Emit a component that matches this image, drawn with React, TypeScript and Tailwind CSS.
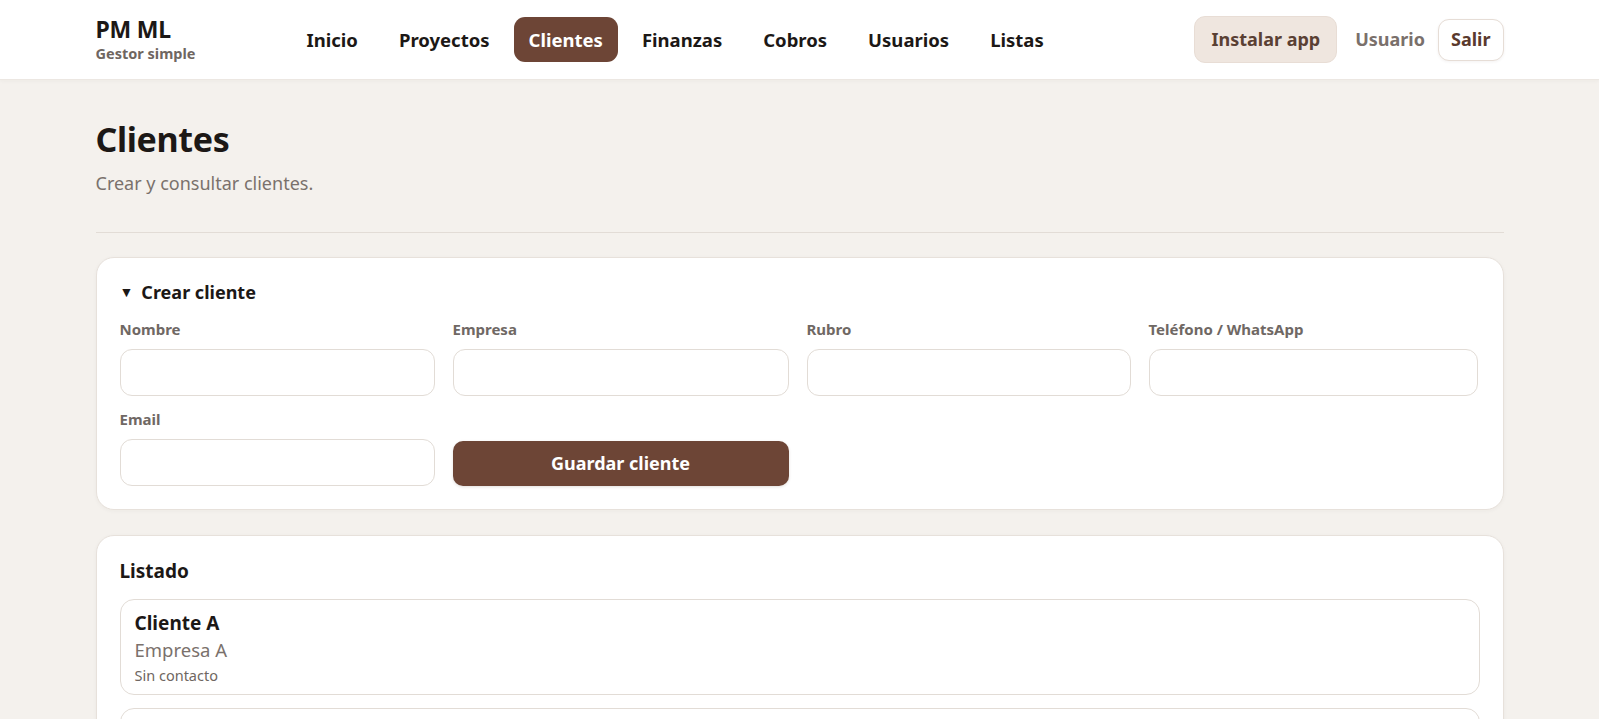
import { useState } from "react";

const navItems = ["Inicio", "Proyectos", "Clientes", "Finanzas", "Cobros", "Usuarios", "Listas"];

const fields = [
  { label: "Nombre", key: "nombre" },
  { label: "Empresa", key: "empresa" },
  { label: "Rubro", key: "rubro" },
  { label: "Teléfono / WhatsApp", key: "telefono" },
];

type Cliente = { nombre: string; empresa: string; contacto?: string };

export default function App() {
  const [open, setOpen] = useState(true);
  const [clientes] = useState<Cliente[]>([
    { nombre: "Cliente A", empresa: "Empresa A" },
    { nombre: "Cliente B", empresa: "Empresa B" },
  ]);

  return (
    <div className="min-h-screen bg-[#f4f1ed] text-[#1c1816] font-['Noto_Sans',sans-serif]">
      {/* Header */}
      <header className="bg-white border-b border-[#ece7e2] shadow-[0_1px_4px_rgba(60,40,30,0.04)]">
        <div className="mx-auto max-w-[1440px] px-4 h-[79px] flex items-center">
          <div className="flex flex-col w-[110px]">
            <span className="text-[23px] font-bold leading-[26px] tracking-[-0.01em]">PM ML</span>
            <span className="text-[14.5px] font-bold text-[#6f6661] leading-[19px] mt-[2px]">Gestor simple</span>
          </div>
          <nav className="ml-[84px] flex items-center gap-[7px]">
            {navItems.map((item) => (
              <a
                key={item}
                href="#"
                className={
                  item === "Clientes"
                    ? "h-[45px] px-[15px] flex items-center rounded-[11px] bg-[#6d4536] text-white text-[18.5px] font-bold"
                    : "h-[45px] px-[17px] flex items-center rounded-[11px] text-[#1c1816] text-[18.5px] font-bold"
                }
              >
                {item}
              </a>
            ))}
          </nav>
          <div className="ml-auto flex items-center">
            <button className="h-[47px] px-4 rounded-[11px] bg-[#efe6df] border border-[#e8ddd5] text-[#5a4034] text-[18px] font-bold">
              Instalar app
            </button>
            <span className="ml-[18px] text-[18px] font-bold text-[#7a706b]">Usuario</span>
            <button className="ml-[13px] h-[42px] px-3 rounded-[11px] bg-white border border-[#e6ddd6] text-[#5a3a2e] text-[18px] font-bold shadow-[0_1px_3px_rgba(60,40,30,0.06)]">
              Salir
            </button>
          </div>
        </div>
      </header>

      <main className="mx-auto max-w-[1440px] px-4 pt-[37px]">
        <h1 className="text-[34px] font-bold leading-[44px] tracking-[-0.01em]">Clientes</h1>
        <p className="mt-[9px] text-[18px] leading-[26px] text-[#7a716c]">Crear y consultar clientes.</p>
        <hr className="mt-[36px] border-t border-[#e2dcd6]" />

        {/* Crear cliente */}
        <section className="mt-[24px] bg-white rounded-[18px] border border-[#e7e1db] shadow-[0_1px_4px_rgba(60,40,30,0.04)] px-[23px] pt-[21px] pb-[23px]">
          <button
            onClick={() => setOpen(!open)}
            className="flex items-center gap-[8px] text-[18px] font-bold leading-[26px]"
          >
            <span className="text-[14px]">{open ? "▼" : "▶"}</span>
            Crear cliente
          </button>
          {open && (
            <div className="mt-[13px] grid grid-cols-[315px_336px_324px_329px] gap-x-[18px]">
              {fields.map((f) => (
                <label key={f.key} className="flex flex-col">
                  <span className="text-[15px] font-bold text-[#6f6864] leading-[22px]">{f.label}</span>
                  <input className="mt-[9px] h-[47px] rounded-[12px] border border-[#e2dcd6] bg-white px-3 outline-none" />
                </label>
              ))}
              <label className="flex flex-col mt-[12px]">
                <span className="text-[15px] font-bold text-[#6f6864] leading-[22px]">Email</span>
                <input className="mt-[9px] h-[47px] rounded-[12px] border border-[#e2dcd6] bg-white px-3 outline-none" />
              </label>
              <div className="mt-[12px] flex items-end">
                <button className="w-full h-[45px] rounded-[10px] bg-[#6d4536] text-white text-[18px] font-bold shadow-[0_1px_3px_rgba(60,40,30,0.15)]">
                  Guardar cliente
                </button>
              </div>
            </div>
          )}
        </section>

        {/* Listado */}
        <section className="mt-[25px] bg-white rounded-[18px] border border-[#e7e1db] shadow-[0_1px_4px_rgba(60,40,30,0.04)] px-[23px] pt-[22px] pb-[22px]">
          <h2 className="text-[19px] font-bold leading-[26px]">Listado</h2>
          <ul className="mt-[15px] flex flex-col gap-[13px]">
            {clientes.map((c) => (
              <li key={c.nombre} className="rounded-[14px] border border-[#e2dcd6] bg-white px-[14px] pt-[10px] pb-[8px]">
                <div className="text-[19px] font-bold leading-[26px]">{c.nombre}</div>
                <div className="text-[18.5px] text-[#7a716c] leading-[28px]">{c.empresa}</div>
                <div className="text-[14.5px] text-[#6f6661] leading-[22px]">{c.contacto ?? "Sin contacto"}</div>
              </li>
            ))}
          </ul>
        </section>
      </main>
    </div>
  );
}
